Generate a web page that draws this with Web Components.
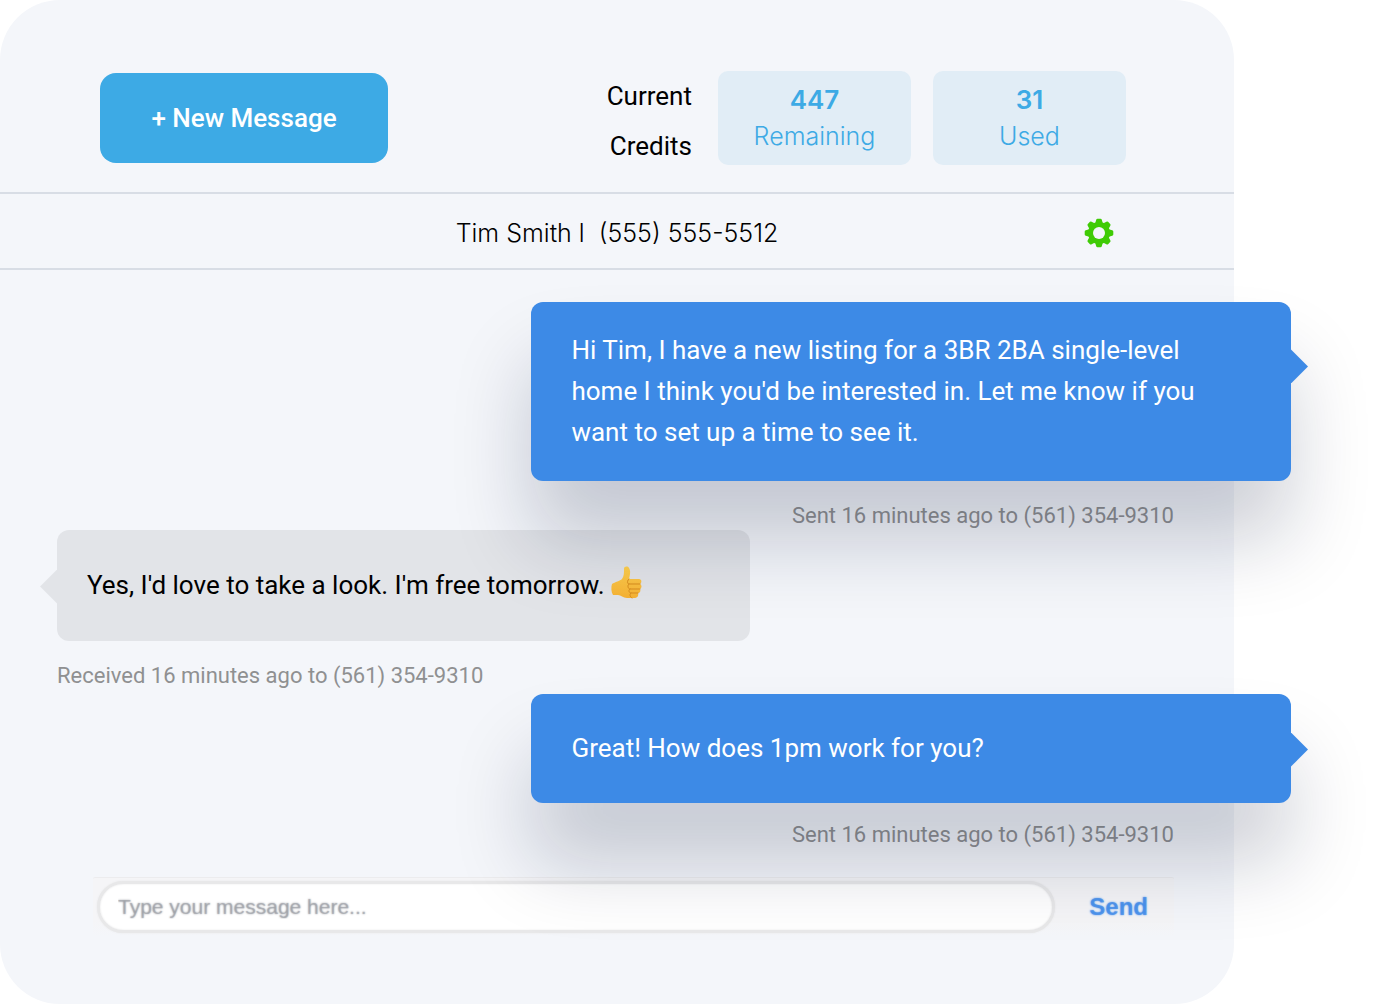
<!DOCTYPE html>
<html lang="en">
<head>
<meta charset="utf-8">
<meta name="viewport" content="width=device-width, initial-scale=1">
<title>Messages</title>
<style>
  html { background: #fff; }
  body { margin: 0; overflow-x: hidden; font-family: Roboto, "Liberation Sans", sans-serif; color: #000; }
</style>
</head>
<body>
<chat-panel>
  <panel-header slot="header">
    <credit-card><span slot="count">447</span>Remaining</credit-card>
    <credit-card><span slot="count">31</span>Used</credit-card>
  </panel-header>
  <contact-bar slot="contact">Tim Smith l&nbsp; (555) 555-5512</contact-bar>
  <chat-message kind="sent" long>
    Hi Tim, I have a new listing for a 3BR 2BA single-level home I think you'd be interested in. Let me know if you want to set up a time to see it.
    <span slot="meta">Sent 16 minutes ago to (561) 354-9310</span>
  </chat-message>
  <chat-message kind="received">
    Yes, I'd love to take a look. I'm free tomorrow. <thumbs-up></thumbs-up>
    <span slot="meta">Received 16 minutes ago to (561) 354-9310</span>
  </chat-message>
  <chat-message kind="sent">
    Great! How does 1pm work for you?
    <span slot="meta">Sent 16 minutes ago to (561) 354-9310</span>
  </chat-message>
  <message-composer slot="composer"></message-composer>
</chat-panel>

<script>
const define = (name, html) => {
  const template = document.createElement('template');
  template.innerHTML = html;
  customElements.define(name, class extends HTMLElement {
    constructor() {
      super();
      this.attachShadow({ mode: 'open' }).append(template.content.cloneNode(true));
    }
  });
};

define('chat-panel', `
  <style>
    :host { display: flex; flex-direction: column; box-sizing: border-box; width: 88.33%; min-height: 100vh;
      padding-bottom: 64px; background: #f4f6fa; border-radius: 60px; }
    main { display: flex; flex-direction: column; padding: 32px 60px 28px 57px; }
  </style>
  <slot name="header"></slot>
  <slot name="contact"></slot>
  <main><slot></slot></main>
  <slot name="composer"></slot>`);

define('panel-header', `
  <style>
    :host { display: flex; align-items: center; justify-content: space-between; padding: 71px 108px 27px 100px;
      border-bottom: 2px solid #d8dde5; }
    button { width: 288px; height: 90px; border: 0; border-radius: 16px; background: #3daae5; color: #fff;
      font: 500 26px/32px Roboto, sans-serif; cursor: pointer; }
    .credits { display: flex; align-items: flex-start; gap: 22px; height: 94px; }
    .label { width: 90px; margin-right: 4px; font-size: 26px; line-height: 50px; text-align: right; }
  </style>
  <button type="button">+ New Message</button>
  <div class="credits"><div class="label">Current Credits</div><slot></slot></div>`);

define('credit-card', `
  <style>
    :host { display: flex; flex-direction: column; align-items: center; box-sizing: border-box; width: 193px; height: 94px;
      padding-top: 11px; border-radius: 10px; background: #e1edf6; color: #3daae5; font: 300 25px/36px Inter, sans-serif; }
    strong { font-size: 26px; font-weight: 600; }
  </style>
  <strong><slot name="count"></slot></strong>
  <span><slot></slot></span>`);

define('contact-bar', `
  <style>
    :host { display: grid; grid-template-columns: 1fr auto 1fr; align-items: center; height: 70px; padding: 4px 120px 0;
      border-bottom: 2px solid #d8dde5; font: 300 25px/32px Inter, sans-serif; }
    button { grid-column: 3; justify-self: end; display: flex; padding: 0; border: 0; background: none; cursor: pointer; }
    .name { grid-column: 2; }
    svg { display: block; width: 30px; height: 30px; }
  </style>
  <span class="name"><slot></slot></span>
  <button type="button" aria-label="Settings">
    <svg viewBox="-15 -15 30 30" aria-hidden="true">
      <defs><mask id="hole"><rect x="-15" y="-15" width="30" height="30" fill="#fff"/><circle r="6" fill="#000"/></mask></defs>
      <g fill="#3fcb05" mask="url(#hole)">
        <circle r="11"/>
        <path id="t" d="M-4 -9 L-2.8 -13.2 Q-2.5 -14.3 -1.5 -14.3 H1.5 Q2.5 -14.3 2.8 -13.2 L4 -9Z"/>
        <use href="#t" transform="rotate(45)"/><use href="#t" transform="rotate(90)"/>
        <use href="#t" transform="rotate(135)"/><use href="#t" transform="rotate(180)"/>
        <use href="#t" transform="rotate(225)"/><use href="#t" transform="rotate(270)"/>
        <use href="#t" transform="rotate(315)"/>
      </g>
    </svg>
  </button>`);

define('chat-message', `
  <style>
    :host { display: flex; flex-direction: column; position: relative; --fill: #3d8ae6; --tail: 51%; --meta-gap: 18px; }
    :host([kind="sent"]) { z-index: 1; align-items: flex-end; }
    :host([long]) { --tail: 36%; --meta-gap: 21px; }
    .bubble { position: relative; box-sizing: border-box; padding: 34px 40px; border-radius: 12px; background: var(--fill);
      font-size: 26px; line-height: 41px; }
    :host([long]) .bubble { padding-block: 28px; }
    .bubble::after { content: ""; position: absolute; top: var(--tail); margin-top: -17px; width: 17px; height: 34px; background: var(--fill); }
    :host([kind="sent"]) .bubble { width: 68%; margin-right: -117px; color: #fff; box-shadow: 0 60px 80px rgba(10, 20, 55, .2); }
    :host([kind="sent"]) .bubble::after { left: 100%; clip-path: polygon(0 0, 100% 50%, 0 100%); }
    :host([kind="received"]) { margin-bottom: 4px; --fill: rgba(0, 0, 0, .07); --meta-gap: 21px; }
    :host([kind="received"]) .bubble { width: 62%; padding: 35px 30px; }
    :host([kind="received"]) .bubble::after { right: 100%; clip-path: polygon(100% 0, 0 50%, 100% 100%); }
    .meta { margin-top: var(--meta-gap); font-size: 22px; line-height: 28px; color: #8f9091; }
  </style>
  <div class="bubble"><slot></slot></div>
  <div class="meta"><slot name="meta"></slot></div>`);

define('thumbs-up', `
  <style>
    :host { display: inline-block; vertical-align: -5px; }
    svg { display: block; width: 31px; height: 33px; }
  </style>
  <svg viewBox="0 0 31 33" role="img" aria-label="thumbs up">
    <defs><linearGradient id="skin" x1="0" y1="0" x2="0" y2="1"><stop offset="0" stop-color="#ffd04d"/><stop offset="1" stop-color="#f6b234"/></linearGradient></defs>
    <path fill="url(#skin)" d="M1 18 C4 16 9 15 11 13 C13 10 13 7 13 3 C13 0 17 0 18 2 C20 5 19 9 18 13 H28 C31 13 31 17 29 18 C31 19 31 22 29 23 C30 25 29 27 27 27 C28 30 26 32 23 32 H16 C12 32 10 29 7 29 H2 C0 26 0 21 1 18Z"/>
    <g fill="none" stroke="#d98d1e" stroke-width="1" stroke-linecap="round"><path d="M18 13 C16 14 16 18 18 18 H29 M18 18 C16 19 17 23 19 23 H29 M19 23 C17 24 18 27 20 27 H27 M20 27 C18 28 19 31 21 32"/></g>
  </svg>`);

define('message-composer', `
  <style>
    :host { display: block; padding: 0 60px 0 93px; }
    form { display: flex; align-items: center; gap: 34px; box-sizing: border-box; height: 60px; padding: 0 26px 2px 4px;
      border-top: 1px solid #ececee; border-radius: 2px; background: linear-gradient(#f5f5f7 70%, #f4f6fa); }
    input { flex: 1; min-width: 0; height: 52px; box-sizing: border-box; padding: 0 18px; border: 3px solid #e8e8e9; border-radius: 26px;
      background: #fff; outline: 0; box-shadow: 0 0 2px #e6e6e7, inset 0 0 2px #e6e6e7; font: 21px/26px "Liberation Sans", Arial, sans-serif; color: #555; }
    input::placeholder { color: rgba(150, 153, 160, .5); opacity: 1; text-shadow: 0 0 2px #9a9da4; }
    button { padding: 0; border: 0; background: none; color: rgba(61, 138, 235, .7); text-shadow: 0 0 2px #5b9df0;
      font: bold 24px/28px "Liberation Sans", Arial, sans-serif; cursor: pointer; }
  </style>
  <form>
    <input type="text" aria-label="Message" placeholder="Type your message here...">
    <button type="button">Send</button>
  </form>`);
</script>
</body>
</html>
